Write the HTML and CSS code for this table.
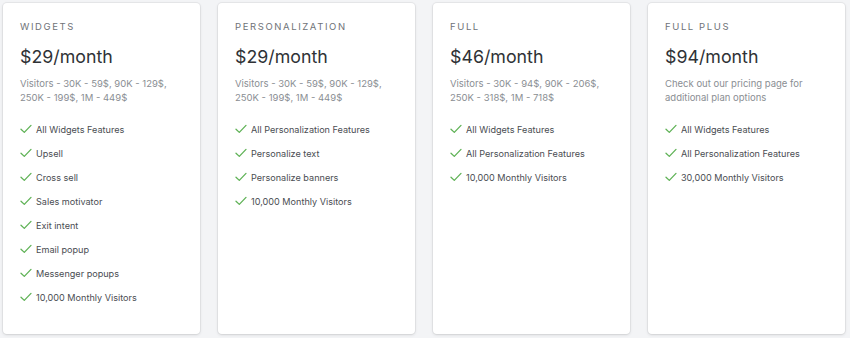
FILE: index.html
```html
<!DOCTYPE html>
<html>
<head>
<meta charset="utf-8">
<link rel="stylesheet" href="styles.css">
</head>
<body>
<div class="plans">
  <div class="card">
    <div class="label">WIDGETS</div>
    <div class="price">$29/month</div>
    <div class="desc">Visitors - 30K - 59$, 90K - 129$, 250K - 199$, 1M - 449$</div>
    <ul class="features">
      <li><svg class="check" viewBox="0 0 12 10"><path d="M1 5.2 L4.3 8.4 L11 1.4"/></svg>All Widgets Features</li>
      <li><svg class="check" viewBox="0 0 12 10"><path d="M1 5.2 L4.3 8.4 L11 1.4"/></svg>Upsell</li>
      <li><svg class="check" viewBox="0 0 12 10"><path d="M1 5.2 L4.3 8.4 L11 1.4"/></svg>Cross sell</li>
      <li><svg class="check" viewBox="0 0 12 10"><path d="M1 5.2 L4.3 8.4 L11 1.4"/></svg>Sales motivator</li>
      <li><svg class="check" viewBox="0 0 12 10"><path d="M1 5.2 L4.3 8.4 L11 1.4"/></svg>Exit intent</li>
      <li><svg class="check" viewBox="0 0 12 10"><path d="M1 5.2 L4.3 8.4 L11 1.4"/></svg>Email popup</li>
      <li><svg class="check" viewBox="0 0 12 10"><path d="M1 5.2 L4.3 8.4 L11 1.4"/></svg>Messenger popups</li>
      <li><svg class="check" viewBox="0 0 12 10"><path d="M1 5.2 L4.3 8.4 L11 1.4"/></svg>10,000 Monthly Visitors</li>
    </ul>
  </div>
  <div class="card">
    <div class="label">PERSONALIZATION</div>
    <div class="price">$29/month</div>
    <div class="desc">Visitors - 30K - 59$, 90K - 129$, 250K - 199$, 1M - 449$</div>
    <ul class="features">
      <li><svg class="check" viewBox="0 0 12 10"><path d="M1 5.2 L4.3 8.4 L11 1.4"/></svg>All Personalization Features</li>
      <li><svg class="check" viewBox="0 0 12 10"><path d="M1 5.2 L4.3 8.4 L11 1.4"/></svg>Personalize text</li>
      <li><svg class="check" viewBox="0 0 12 10"><path d="M1 5.2 L4.3 8.4 L11 1.4"/></svg>Personalize banners</li>
      <li><svg class="check" viewBox="0 0 12 10"><path d="M1 5.2 L4.3 8.4 L11 1.4"/></svg>10,000 Monthly Visitors</li>
    </ul>
  </div>
  <div class="card">
    <div class="label">FULL</div>
    <div class="price">$46/month</div>
    <div class="desc">Visitors - 30K - 94$, 90K - 206$, 250K - 318$, 1M - 718$</div>
    <ul class="features">
      <li><svg class="check" viewBox="0 0 12 10"><path d="M1 5.2 L4.3 8.4 L11 1.4"/></svg>All Widgets Features</li>
      <li><svg class="check" viewBox="0 0 12 10"><path d="M1 5.2 L4.3 8.4 L11 1.4"/></svg>All Personalization Features</li>
      <li><svg class="check" viewBox="0 0 12 10"><path d="M1 5.2 L4.3 8.4 L11 1.4"/></svg>10,000 Monthly Visitors</li>
    </ul>
  </div>
  <div class="card">
    <div class="label">FULL PLUS</div>
    <div class="price">$94/month</div>
    <div class="desc">Check out our pricing page for additional plan options</div>
    <ul class="features">
      <li><svg class="check" viewBox="0 0 12 10"><path d="M1 5.2 L4.3 8.4 L11 1.4"/></svg>All Widgets Features</li>
      <li><svg class="check" viewBox="0 0 12 10"><path d="M1 5.2 L4.3 8.4 L11 1.4"/></svg>All Personalization Features</li>
      <li><svg class="check" viewBox="0 0 12 10"><path d="M1 5.2 L4.3 8.4 L11 1.4"/></svg>30,000 Monthly Visitors</li>
    </ul>
  </div>
</div>
</body>
</html>
```
FILE: styles.css
```css
html, body {
  margin: 0;
  padding: 0;
  background: #f3f4f6;
}
body {
  font-family: Inter, "Noto Sans", sans-serif;
  -webkit-font-smoothing: antialiased;
}
.plans {
  display: flex;
  gap: 18px;
  padding: 3px 3px 4px 3px;
}
.card {
  width: 197px;
  height: 331px;
  box-sizing: border-box;
  background: #fff;
  border-radius: 4px;
  box-shadow: 0 0 0 1px rgba(63, 63, 68, 0.06), 0 1px 3px rgba(63, 63, 68, 0.15);
  padding: 18px 17px 0 17px;
}
.label {
  font-size: 9.5px;
  line-height: 12px;
  letter-spacing: 1.6px;
  color: #6f7378;
}
.price {
  margin-top: 12px;
  font-size: 17.8px;
  line-height: 24px;
  color: #2f3236;
}
.desc {
  margin-top: 8px;
  font-size: 9.5px;
  line-height: 14px;
  color: #8a8e93;
  padding-right: 10px;
}
.features {
  list-style: none;
  margin: 12px 0 0 0;
  padding: 0;
}
.features li {
  display: flex;
  align-items: center;
  height: 24px;
  font-size: 9.1px;
  color: #4a4d52;
}
.check {
  width: 12px;
  height: 10px;
  margin-right: 4px;
  flex: none;
}
.check path {
  fill: none;
  stroke: #5fb256;
  stroke-width: 1.3;
  stroke-linecap: round;
  stroke-linejoin: round;
}
```
